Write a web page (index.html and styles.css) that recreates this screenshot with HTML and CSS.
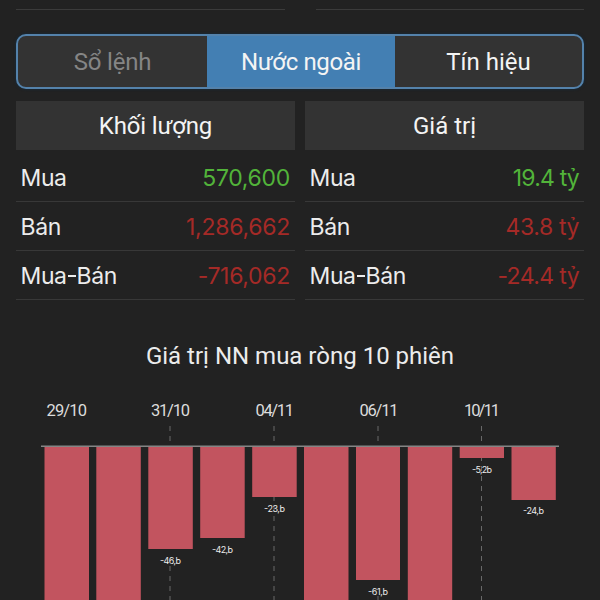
FILE: index.html
```html
<!DOCTYPE html>
<html lang="vi">
<head>
<meta charset="utf-8">
<title>Nước ngoài</title>
<link rel="stylesheet" href="styles.css">
</head>
<body>
<main class="screen">
  <div class="rules"><span class="rule"></span><span class="rule"></span></div>
  <nav class="tabs">
    <div class="tab muted"><span class="t-order">Sổ lệnh</span></div>
    <div class="tab active"><span class="t-foreign">Nước ngoài</span></div>
    <div class="tab"><span class="t-signal">Tín hiệu</span></div>
  </nav>
  <div class="tables">
    <section class="table">
      <h2 class="head"><span class="h-volume">Khối lượng</span></h2>
      <div class="row"><span class="label">Mua</span><span class="num up n-buy">570,600</span></div>
      <div class="row"><span class="label">Bán</span><span class="num down n-sell">1,286,662</span></div>
      <div class="row"><span class="label">Mua<i class="dash"></i>Bán</span><span class="num down n-net">-716,062</span></div>
    </section>
    <section class="table">
      <h2 class="head"><span class="h-value">Giá trị</span></h2>
      <div class="row"><span class="label">Mua</span><span class="num up v-buy">19.4 tỷ</span></div>
      <div class="row"><span class="label">Bán</span><span class="num down v-sell">43.8 tỷ</span></div>
      <div class="row"><span class="label">Mua<i class="dash"></i>Bán</span><span class="num down v-net">-24.4 tỷ</span></div>
    </section>
  </div>
  <h1 class="title"><span>Giá trị NN mua ròng 10 phiên</span></h1>
  <svg class="chart" viewBox="0 390 600 210" width="600" height="210">
    <g class="guides">
      <path d="M170 426V446M274 426V446M378 426V446M481.500 426V446"/>
      <path d="M170 566V600M274 496V600M378 596V600M481.500 456V600"/>
    </g>
    <g class="bars">
      <rect x="44.500" y="446" width="44.500" height="154"/>
      <rect x="96.300" y="446" width="44.500" height="154"/>
      <rect x="148.300" y="446" width="44.500" height="103"/>
      <rect x="200.200" y="446" width="44.500" height="92"/>
      <rect x="252.200" y="446" width="44.500" height="51"/>
      <rect x="304" y="446" width="44.500" height="154"/>
      <rect x="356" y="446" width="44" height="134"/>
      <rect x="407.800" y="446" width="44.400" height="154"/>
      <rect x="459.700" y="446" width="44.300" height="12"/>
      <rect x="511.500" y="446" width="44.300" height="54"/>
    </g>
    <rect class="axis" x="41" y="445.500" width="518" height="1.500"/>
    <g class="dates">
      <text x="46.500" y="416" textLength="40.500">29/10</text>
      <text x="151" y="416" textLength="39">31/10</text>
      <text x="255.500" y="416" textLength="38.500">04/11</text>
      <text x="359.500" y="416" textLength="39">06/11</text>
      <text x="464" y="416" textLength="36">10/11</text>
    </g>
    <g class="values">
      <text x="160" y="563.500" textLength="21">-46,b</text>
      <text x="212" y="553" textLength="21">-42,b</text>
      <text x="264" y="511.500" textLength="21">-23,b</text>
      <text x="368" y="594.500" textLength="20">-61,b</text>
      <text x="472" y="472.500" textLength="20">-5,2b</text>
      <text x="523" y="514" textLength="21">-24,b</text>
    </g>
  </svg>
</main>
</body>
</html>
```
FILE: styles.css
```css
* { box-sizing: border-box; }
body { margin: 0; background: #222; }
.screen {
  width: 600px;
  height: 600px;
  overflow: hidden;
  background: #222;
  color: #ececec;
  font-family: Inter, "Liberation Sans", sans-serif;
}
.rules { display: flex; gap: 31px; padding: 9px 16px 0; height: 34px; }
.rule { flex: 1; height: 1px; background: #3b3b3b; }
.tabs {
  display: grid;
  grid-template-columns: 189px 188px 1fr;
  height: 55px;
  margin: 0 16px;
  border: 2px solid #5482ab;
  border-radius: 10px;
  overflow: hidden;
  background: #333;
  box-shadow: 0 0 3px #102c42;
}
.tab {
  display: flex;
  align-items: center;
  justify-content: center;
  padding-top: 1px;
  font: 400 24px Roboto, sans-serif;
  color: #f4f4f4;
  white-space: nowrap;
}
.t-order { letter-spacing: -0.2px; }
.t-foreign { letter-spacing: -0.35px; }
.muted { color: #858585; }
.active { background: #437fb3; }
.tables { display: grid; grid-template-columns: 279px 279px; gap: 10px; padding: 12px 16px 0; }
.head {
  display: flex;
  align-items: center;
  justify-content: center;
  height: 49px;
  margin: 0;
  background: #333;
  font: 400 24px Roboto, sans-serif;
  color: #f4f4f4;
}
.h-volume { letter-spacing: -0.15px; }
.row {
  display: flex;
  align-items: center;
  justify-content: space-between;
  height: 49px;
  padding: 2px 5px 0;
  border-bottom: 1px solid #383838;
  font-size: 23px;
  line-height: 28px;
  white-space: nowrap;
}
.head + .row { height: 52px; padding-top: 5px; }
.label { margin-left: -0.5px; letter-spacing: -0.4px; }
.dash { display: inline-block; width: 8px; height: 2px; margin: 0 1px 7px; background: currentColor; }
.n-buy { letter-spacing: -0.3px; }
.n-sell { letter-spacing: -0.25px; }
.n-net { letter-spacing: -0.3px; }
.v-buy { letter-spacing: -0.8px; }
.v-sell { letter-spacing: -0.4px; }
.v-net { letter-spacing: -0.6px; }
.up { color: #52b43a; }
.down { color: #a52a27; }
.title {
  margin: 39px 0 0;
  height: 32px;
  font: 400 24px/34px Roboto, sans-serif;
  text-align: center;
  white-space: nowrap;
}
.chart { display: block; margin-top: 19px; }
.guides path { fill: none; stroke: #696969; stroke-width: 1; stroke-dasharray: 5 5; }
.bars { fill: #c2545f; }
.axis { fill: #858585; }
.dates { fill: #dcdcdc; font: 400 16.5px Roboto, sans-serif; }
.values { fill: #ededed; font: 400 9px Inter, sans-serif; }
```
